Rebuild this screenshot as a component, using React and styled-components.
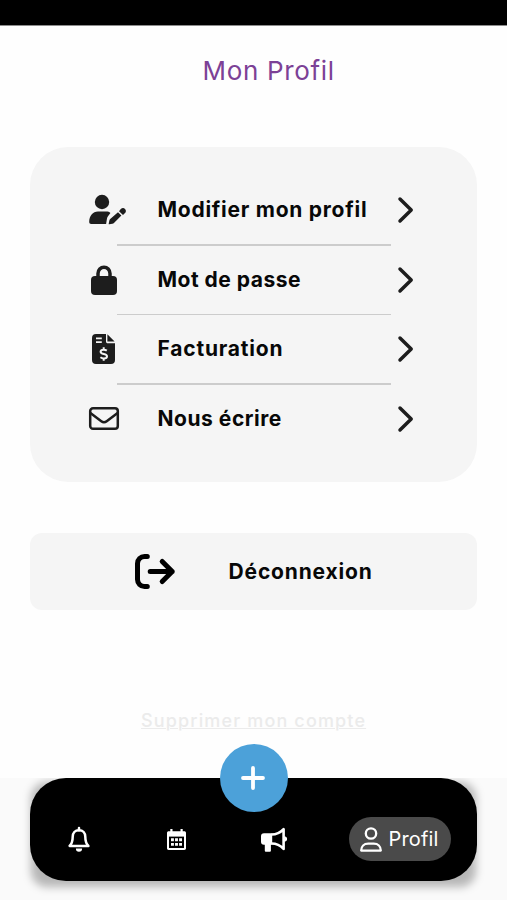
import React from "react";
import styled, { createGlobalStyle } from "styled-components";

const GlobalStyle = createGlobalStyle`
  * { box-sizing: border-box; }
  body { margin: 0; background: #fff; font-family: Inter, "Open Sans", sans-serif; }
  button, a { font: inherit; color: inherit; }
  svg { display: block; flex: none; overflow: visible; }
`;

const Screen = styled.div`
  width: 507px;
  height: 900px;
  display: flex;
  flex-direction: column;
  background: #fefefe;
  overflow: hidden;
`;

const StatusBar = styled.div`
  height: 26px;
  flex: none;
  background: #000;
  border-bottom: 1px solid #8c8c8c;
`;

const Content = styled.main`
  height: 752px;
  flex: none;
  padding: 0 30px;
  display: flex;
  flex-direction: column;
`;

const Title = styled.h1`
  margin: 28px 0 0;
  padding-left: 172.5px;
  height: 34px;
  line-height: 34px;
  font-size: 26px;
  font-weight: 400;
  letter-spacing: 0.68px;
  color: #7c4196;
  white-space: nowrap;
`;

const Menu = styled.ul`
  list-style: none;
  margin: 59px 0 0;
  padding: 29px 57px 0 57px;
  height: 335px;
  background: #f5f5f5;
  border-radius: 38px;
`;

const MenuItem = styled.li`
  height: 69.6px;
  display: grid;
  grid-template-rows: 68px 1.6px;
`;

const MenuButton = styled.button`
  border: 0;
  padding: 0;
  background: none;
  display: grid;
  grid-template-columns: 70.5px 1fr 32px;
  align-items: center;
  text-align: left;
  color: #1d1d1d;
`;

const Divider = styled.div`
  margin: 0 29px 0 30px;
  background: #cccccc;
`;

const Label = styled.span`
  font-size: 21px;
  line-height: 26px;
  font-weight: 700;
  letter-spacing: ${(p) => p.$spacing}px;
  color: #080808;
  white-space: nowrap;
`;

const LogoutButton = styled.button`
  margin-top: 51px;
  height: 77px;
  flex: none;
  border: 0;
  border-radius: 12px;
  padding: 0 0 0 105px;
  background: #f5f5f5;
  display: flex;
  align-items: center;
  gap: 53.6px;
`;

const DeleteLink = styled.a`
  margin: 98px 0 0 111px;
  line-height: 26px;
  font-size: 18px;
  font-weight: 500;
  letter-spacing: ${(p) => p.$spacing}px;
  color: #ebebeb;
  text-decoration: underline;
  text-decoration-thickness: 1px;
  white-space: nowrap;
`;

const Footer = styled.footer`
  position: relative;
  flex: 1;
  background: #fafafa;
  padding: 0 30px;
`;

const NavShadow = styled.div`
  position: relative;
  height: 103px;
  clip-path: inset(0 -20px -20px -20px);

  &::before {
    content: "";
    position: absolute;
    inset: 4px 1px -6px 1px;
    border-radius: 16px;
    background: rgba(0, 0, 0, 0.27);
    filter: blur(4px);
  }
`;

const Nav = styled.nav`
  position: relative;
  height: 103px;
  border-radius: 36px;
  background: #000;
  color: #fff;
  display: grid;
  grid-template-columns: 98px 97px 98px 1fr;
  padding-top: 39px;
  align-items: start;
`;

const NavItem = styled.button`
  height: 44px;
  padding: 0;
  border: 0;
  background: none;
  display: flex;
  align-items: center;
  justify-content: center;
`;

const ActiveItem = styled(NavItem)`
  width: 102px;
  margin-left: 26px;
  border-radius: 22px;
  background: #4a4a4a;
  gap: 7px;
  padding-right: 2px;
  font-size: 20px;
  letter-spacing: 0.15px;
`;

const AddButton = styled.button`
  position: absolute;
  left: 220px;
  top: -34px;
  width: 68px;
  height: 68px;
  border: 0;
  padding: 0 2px 0 0;
  border-radius: 50%;
  background: #4ca1d9;
  display: flex;
  align-items: center;
  justify-content: center;
`;

const IconSlot = styled.span`
  display: flex;
  padding-left: ${(p) => p.$indent}px;
`;

const UserEditIcon = () => (
  <svg width="38" height="32" viewBox="0 0 38 32" fill="currentColor">
    <circle cx="14" cy="8" r="7.2" />
    <path d="M10 17.6h8.2c1.8 0 3.1.5 4.2 1.4l-2.4 3.2c-.5.6-.8 1.5-1 2.4l-.9 5.5H3.2c-1.3 0-2-.7-2-2 0-6 3.6-10.5 8.8-10.5Z" />
    <path d="m30 18.2 3.4 3.4-7.2 7.2c-.6.6-1.1.9-1.8 1l-3.1.5c-.4.1-.7-.2-.6-.6l.6-3c.1-.6.4-1.2.9-1.7Z" />
    <path d="m31 17.3 1.8-2.2c1.3-1.5 3.1-1.4 4.2-.2 1.2 1.2 1.2 3 0 4.1L35 21Z" />
  </svg>
);

const LockIcon = () => (
  <svg width="26" height="30" viewBox="0 0 26 30">
    <rect x="0" y="11" width="26" height="19" rx="4" fill="currentColor" />
    <path d="M7 13V8.6a5.9 6.3 0 0 1 12 0V13" fill="none" stroke="currentColor" strokeWidth="3.5" />
  </svg>
);

const InvoiceIcon = () => (
  <svg width="23" height="30" viewBox="0 0 23 30">
    <path d="M4 0h10v7.2c0 1.4.6 2 2 2h7V26a4 4 0 0 1-4 4H4a4 4 0 0 1-4-4V4a4 4 0 0 1 4-4Z" fill="currentColor" />
    <path d="m15.4.2 7.2 7.4h-7.2Z" fill="currentColor" />
    <path d="M4 4.4h5.8M4 8.1h5.8" stroke="#f5f5f5" strokeWidth="1.6" />
    <path d="M14.8 16.6c-1-.7-2-.9-3.2-.9-1.9 0-3 .8-3 2 0 3 6.4 1.5 6.4 4.5 0 1.4-1.2 2.2-3.2 2.2-1.3 0-2.4-.4-3.4-1.1M11.7 13.3v2.4m0 8.6v2.5" fill="none" stroke="#f5f5f5" strokeWidth="2" />
  </svg>
);

const MailIcon = () => (
  <svg width="30" height="23" viewBox="0 0 30 23" fill="none" stroke="currentColor" strokeWidth="2.5" strokeLinejoin="round">
    <rect x="1.2" y="1.2" width="27.6" height="20.6" rx="2.8" />
    <path d="m1.4 6 10.9 8.2c1.8 1.4 3.6 1.4 5.4 0L28.6 6" />
  </svg>
);

const ChevronIcon = () => (
  <svg width="16" height="26" viewBox="0 0 16 26" fill="none" stroke="currentColor" strokeWidth="3.5" strokeLinecap="round" strokeLinejoin="round">
    <path d="m2 2 11.2 11L2 24" />
  </svg>
);

const LogoutIcon = () => (
  <svg width="40" height="35" viewBox="0 0 40 35" fill="none" stroke="#000" strokeWidth="5" strokeLinecap="round" strokeLinejoin="round">
    <path d="M12.3 2.5H9.5a7 7 0 0 0-7 7v16a7 7 0 0 0 7 7h2.8" />
    <path d="M15.2 17.5h22M27.2 7.5l10 10-10 10" />
  </svg>
);

const BellIcon = () => (
  <svg width="22" height="25" viewBox="0 0 22 25">
    <path d="M11 3.2c-4 0-6.3 2.8-6.3 6.6 0 4.8-1.1 7.2-3.1 9.1h18.8c-2-1.9-3.1-4.3-3.1-9.1 0-3.8-2.3-6.6-6.3-6.6Z" fill="none" stroke="#fff" strokeWidth="2.5" strokeLinejoin="round" />
    <path d="M11 1v2.2" stroke="#fff" strokeWidth="2.5" strokeLinecap="round" />
    <path d="M7.9 21.5h6.2a3.1 3.3 0 0 1-6.2 0Z" fill="#fff" />
  </svg>
);

const CalendarIcon = () => (
  <svg width="19" height="21" viewBox="0 0 19 21">
    <path d="M1.7 2.2h1.6V0h2.2v2.2h8V0h2.2v2.2h1.6c1 0 1.7.7 1.7 1.7v15.4c0 1-.7 1.7-1.7 1.7H1.7C.7 21 0 20.3 0 19.3V3.9c0-1 .7-1.7 1.7-1.7Z" fill="#fff" />
    <rect x="2" y="7.6" width="15" height="11.4" fill="#000" />
    <path d="M4 10.8h11M4 15.4h11" stroke="#fff" strokeWidth="2.9" strokeDasharray="2.9 1.15" />
  </svg>
);

const MegaphoneIcon = () => (
  <svg width="26" height="25" viewBox="0 0 26 25">
    <path d="M3 6.2h8.2v11.6H9.9v5.6c0 .8-.5 1.3-1.3 1.3H5.1c-.8 0-1.3-.5-1.3-1.3v-5.6H3a3 3 0 0 1-3-3V9.2a3 3 0 0 1 3-3Z" fill="#fff" />
    <path d="M10.5 7.5c4.6 0 8.800-1.800 12.100-5.400v19.800C19.300 18.300 15.100 16.500 10.500 16.500" fill="none" stroke="#fff" strokeWidth="2.6" strokeLinejoin="round" />
    <path d="M23.5 9.8a2 2 0 0 1 0 4.4Z" fill="#fff" stroke="#fff" />
  </svg>
);

const PersonIcon = () => (
  <svg width="22" height="25" viewBox="0 0 22 25" fill="none" stroke="#fff" strokeWidth="2.3" strokeLinejoin="round">
    <circle cx="11" cy="6.5" r="5.2" />
    <path d="M1.2 23.6c0-4.3 2.9-7 7-7h5.6c4.1 0 7 2.7 7 7Z" />
  </svg>
);

const PlusIcon = () => (
  <svg width="24" height="24" viewBox="0 0 24 24" stroke="#fff" strokeWidth="3.8" strokeLinecap="round">
    <path d="M12 2v20M2 12h20" />
  </svg>
);

const items = [
  { label: "Modifier mon profil", Icon: UserEditIcon, indent: 1, spacing: 0.74 },
  { label: "Mot de passe", Icon: LockIcon, indent: 4, spacing: 0.5 },
  { label: "Facturation", Icon: InvoiceIcon, indent: 5, spacing: 0.8 },
  { label: "Nous écrire", Icon: MailIcon, indent: 1.5, spacing: 0.53 },
];

export default function App() {
  return (
    <>
      <GlobalStyle />
      <Screen>
        <StatusBar />
        <Content>
          <Title>Mon Profil</Title>
          <Menu>
            {items.map(({ label, Icon, indent, spacing }, i) => (
              <MenuItem key={label}>
                <MenuButton>
                  <IconSlot $indent={indent}><Icon /></IconSlot>
                  <Label $spacing={spacing}>{label}</Label>
                  <IconSlot $indent={9.8}><ChevronIcon /></IconSlot>
                </MenuButton>
                {i < items.length - 1 && <Divider />}
              </MenuItem>
            ))}
          </Menu>
          <LogoutButton>
            <LogoutIcon />
            <Label $spacing={0.82}>Déconnexion</Label>
          </LogoutButton>
          <DeleteLink $spacing={1.15}>Supprimer mon compte</DeleteLink>
        </Content>
        <Footer>
          <NavShadow>
            <Nav>
              <NavItem aria-label="Notifications"><BellIcon /></NavItem>
              <NavItem aria-label="Calendrier"><CalendarIcon /></NavItem>
              <NavItem aria-label="Annonces"><MegaphoneIcon /></NavItem>
              <ActiveItem><PersonIcon />Profil</ActiveItem>
            </Nav>
          </NavShadow>
          <AddButton aria-label="Ajouter"><PlusIcon /></AddButton>
        </Footer>
      </Screen>
    </>
  );
}
